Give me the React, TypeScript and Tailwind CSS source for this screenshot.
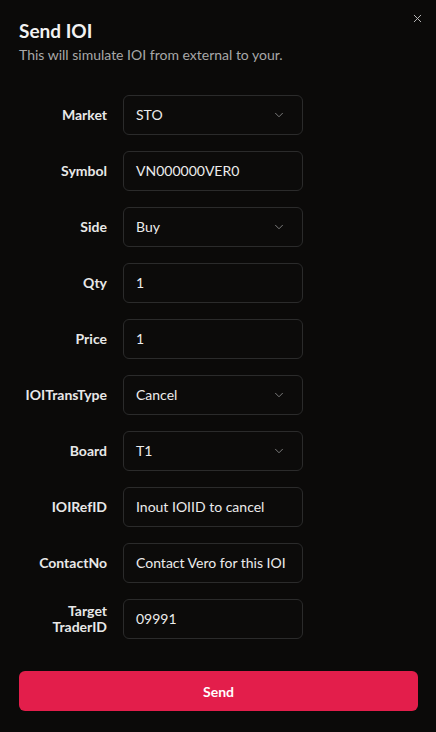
import { X, ChevronDown } from "lucide-react";

type Field = { label: string; value: string; select?: boolean; twoLine?: boolean };

const fields: Field[] = [
  { label: "Market", value: "STO", select: true },
  { label: "Symbol", value: "VN000000VER0" },
  { label: "Side", value: "Buy", select: true },
  { label: "Qty", value: "1" },
  { label: "Price", value: "1" },
  { label: "IOITransType", value: "Cancel", select: true },
  { label: "Board", value: "T1", select: true },
  { label: "IOIRefID", value: "Inout IOIID to cancel" },
  { label: "ContactNo", value: "Contact Vero for this IOI" },
  { label: "Target TraderID", value: "09991", twoLine: true },
];

const FieldRow = ({ field }: { field: Field }) => (
  <div className="flex items-center gap-4">
    <label className="w-[88px] text-right text-[14px] font-bold leading-[16px] text-[#e8e8e8]">
      {field.twoLine ? (
        <>
          Target
          <br />
          TraderID
        </>
      ) : (
        field.label
      )}
    </label>
    <div className="flex h-10 w-[180px] items-center justify-between rounded-md border border-[#2b2b2b] bg-[#0c0b0a] pl-3 pr-4">
      <span className="text-[14px] leading-[18px] text-[#ececec] whitespace-nowrap">{field.value}</span>
      {field.select && <ChevronDown size={14} strokeWidth={1.5} className="text-[#8a8a8a]" />}
    </div>
  </div>
);

const App = () => {
  return (
    <div
      className="relative h-[732px] w-[436px] bg-[#0b0a09] text-white"
      style={{ fontFamily: 'Lato, "Noto Sans", sans-serif' }}
    >
      <button className="absolute right-[12px] top-[12px] text-[#bdbdbd]">
        <X size={13} strokeWidth={1.75} />
      </button>

      <div className="px-[19px] pt-[19px]">
        <h2 className="text-[19px] font-bold leading-[24px] text-[#f2f2f2]">Send IOI</h2>
        <p className="mt-[2px] text-[14px] leading-[20px] text-[#a8a8a8]">
          This will simulate IOI from external to your.
        </p>
      </div>

      <div className="mt-[30px] flex flex-col gap-4 pl-[19px]">
        {fields.map((f) => (
          <FieldRow key={f.label} field={f} />
        ))}
      </div>

      <div className="mt-[32px] pl-[19px] pr-[18px]">
        <button className="flex h-10 w-full items-center justify-center rounded-md bg-[#e31e4b] text-[14px] font-bold text-white">
          Send
        </button>
      </div>
    </div>
  );
};

export default App;
